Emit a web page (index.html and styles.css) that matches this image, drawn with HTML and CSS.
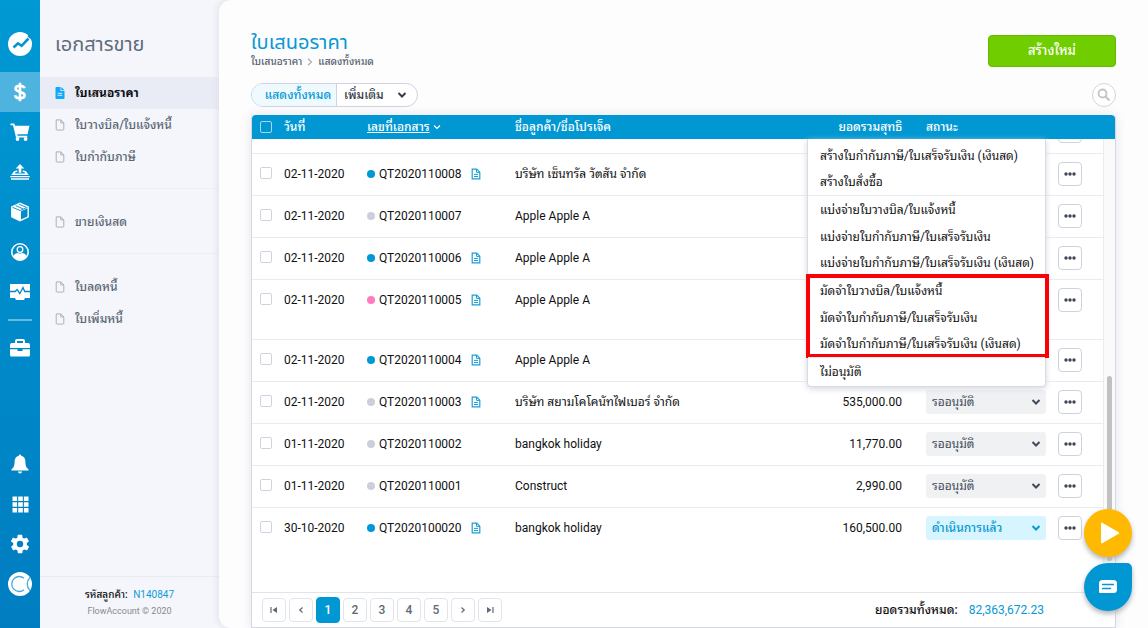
FILE: index.html
```
<!DOCTYPE html>
<html lang="th">
<head>
<meta charset="utf-8">
<meta name="viewport" content="width=device-width, initial-scale=1">
<title>ใบเสนอราคา</title>
<link rel="stylesheet" href="styles.css">
</head>
<body>
<svg class="sprite" aria-hidden="true">
  <symbol id="file" viewBox="0 0 10 12"><path d="M1.2.9h4.6l3 3v6.2a1 1 0 0 1-1 1H2.200a1 1 0 0 1-1-1z M5.800.9v3h3" fill="none" stroke="currentColor" stroke-width="1"/></symbol>
  <symbol id="file-solid" viewBox="0 0 10 12"><path d="M1.500 0h4v4h4v7a1 1 0 0 1-1 1h-7a1 1 0 0 1-1-1V1a1 1 0 0 1 1-1zM6.300 0l3.200 3.200H6.300z" fill="#12a8fb"/><path d="M2.700 6.300h4.500M2.700 8.300h4.500" stroke="#d5f1ff"/></symbol>
  <symbol id="doc" viewBox="0 0 10 12"><path d="M1.200 1.200h4.600l3 3v6.600H1.200z" fill="none" stroke="#1a9fd8" stroke-width="1.200"/><path d="M5.500 1v3.400H9M3 6.400h4M3 8.500h4" fill="none" stroke="#1a9fd8"/></symbol>
  <symbol id="chev" viewBox="0 0 10 8"><path d="M1.500 2L5 5.500 8.500 2" fill="none" stroke="currentColor" stroke-width="2"/></symbol>
  <symbol id="dots" viewBox="0 0 12 4"><circle cx="2" cy="2" r="1.700"/><circle cx="6" cy="2" r="1.700"/><circle cx="10" cy="2" r="1.700"/></symbol>
</svg>
<div class="app">
  <nav class="rail" aria-label="เมนูหลัก">
    <a class="rail-item logo" href="#" aria-label="FlowAccount"><svg viewBox="0 0 24 24" width="24" height="24"><circle cx="12" cy="12" r="12" fill="#fff"/><path d="M5.500 15.500L10 11.300l3.600 2.500L20.500 6.500" fill="none" stroke="#0893cf" stroke-width="2.600"/><path d="M20 3.500l3.500 3" stroke="#0893cf" stroke-width="2"/></svg></a>
    <a class="rail-item active" href="#" aria-label="ขาย"><svg viewBox="0 0 20 20" width="20" height="20"><path d="M14.600 6.300C14.200 4.600 12.400 3.700 10 3.700c-2.600 0-4.400 1-4.400 2.900 0 4.400 9 2.300 9 6.700 0 2-2 3-4.600 3-2.700 0-4.600-1.100-4.900-3.100M10 .8v18.400" fill="none" stroke="#fff" stroke-width="2.600"/></svg></a>
    <a class="rail-item" href="#" aria-label="ซื้อ"><svg viewBox="0 0 20 20" width="20" height="20"><path d="M.5 1.500h3.700l.9 2.200h14.400l-2 8.600H7.300l.3 1.400h9.700v1.800H6L3 3.300H.5z" fill="#fff"/><circle cx="7.500" cy="17" r="1.900" fill="#fff"/><circle cx="15.600" cy="17" r="1.900" fill="#fff"/></svg></a>
    <a class="rail-item" href="#" aria-label="ค่าใช้จ่าย"><svg viewBox="0 0 20 18" width="20" height="18"><path d="M10 1l4.300 4.500h-3v4.200H8.700V5.500h-3z" fill="#fff"/><path d="M7.300 7.200L4 8.200 1.300 12h17.400L16 8.200l-3.300-1v1.600l2.300.8v.9H5v-.9l2.300-.8z" fill="#fff"/><path d="M.3 13.600h19.400M1 16h18" stroke="#fff" stroke-width="1.300"/></svg></a>
    <a class="rail-item" href="#" aria-label="สินค้า"><svg viewBox="0 0 20 20" width="20" height="20"><path d="M10 .6l8.900 3.900v10.800L10 19.500l-8.900-4.200V4.500z" fill="#fff"/><path d="M11 9.300l6.500-3v8.100L11 17.600z" fill="#068bca"/><path d="M2.500 5.300L10 8.500l7.500-3.200M5.700 3.600l7.400 3.300M9 2.200l7 3" fill="none" stroke="#068bca" stroke-width=".9"/></svg></a>
    <a class="rail-item" href="#" aria-label="ผู้ติดต่อ"><svg viewBox="0 0 20 20" width="20" height="20"><circle cx="10" cy="10" r="8.200" fill="none" stroke="#fff" stroke-width="1.500"/><circle cx="10" cy="7.500" r="2.800" fill="none" stroke="#fff" stroke-width="1.300"/><path d="M3.300 14c1-2.200 3-2.800 4.700-3 1.300.8 2.700.8 4 0 1.700.2 3.700.8 4.700 3-1.300 2.700-4 4.500-6.700 4.500S4.600 16.700 3.300 14z" fill="#fff"/></svg></a>
    <a class="rail-item" href="#" aria-label="รายงาน"><svg viewBox="0 0 20 18" width="20" height="18"><path d="M0 1h20v14h-5l-1 2H6l-1-2H0z" fill="#fff"/><path d="M0 8.500h5.200l2-2 2.600 4.200L13 4.500l1.700 4H20" fill="none" stroke="#0587c7" stroke-width="1.300"/></svg></a>
    <hr class="rail-rule">
    <a class="rail-item" href="#" aria-label="เครื่องมือ"><svg viewBox="0 0 20 18" width="20" height="18"><path d="M6 4V2a1 1 0 0 1 1-1h6a1 1 0 0 1 1 1v2" fill="none" stroke="#fff" stroke-width="2"/><path d="M2 4h16a2 2 0 0 1 2 2v3H0V6a2 2 0 0 1 2-2zM0 10.200h7.500V12h5v-1.800H20V16a1.500 1.500 0 0 1-1.500 1.500h-17A1.500 1.500 0 0 1 0 16z" fill="#fff"/></svg></a>
    <div class="rail-bottom">
      <a class="rail-item" href="#" aria-label="แจ้งเตือน"><svg viewBox="0 0 18 20" width="18" height="20"><path d="M9 .5c.8 0 1.200.6 1.200 1.300 2.800.7 4.200 3 4.200 5.800 0 4.600 1.200 6.500 3.100 7.600V16.500H.5v-1.300c1.900-1.100 3.100-3 3.100-7.600C3.600 4.800 5 2.500 7.800 1.800 7.800 1.100 8.200.5 9 .5zM7 17.500h4a2 2 0 0 1-4 0z" fill="#fff"/></svg></a>
      <a class="rail-item" href="#" aria-label="แอป"><svg viewBox="0 0 17 17" width="17" height="17"><path d="M.5.5h4.600v4.600H.5zM6.200.5h4.600v4.600H6.200zM11.900.5h4.600v4.600h-4.600zM.5 6.200h4.600v4.600H.5zM6.200 6.200h4.600v4.600H6.200zM11.900 6.200h4.600v4.600h-4.600zM.5 11.900h4.600v4.600H.5zM6.200 11.900h4.600v4.600H6.200zM11.900 11.900h4.600v4.600h-4.600z" fill="#fff"/></svg></a>
      <a class="rail-item" href="#" aria-label="ตั้งค่า"><svg viewBox="0 0 24 24" width="22" height="22"><path d="M19.400 13c0-.3.1-.6.1-1s0-.7-.1-1l2.100-1.600c.2-.2.300-.4.100-.6l-2-3.500c-.1-.2-.4-.3-.6-.2l-2.500 1a7.300 7.300 0 0 0-1.700-1l-.4-2.600c0-.3-.2-.5-.5-.5h-4c-.2 0-.4.200-.5.400l-.4 2.700c-.6.2-1.100.6-1.700 1l-2.500-1c-.2-.1-.5 0-.6.200l-2 3.500c-.1.200-.1.500.1.600L4.600 11v2l-2.100 1.600c-.2.200-.3.400-.1.600l2 3.500c.1.200.4.300.6.200l2.500-1c.5.400 1.100.7 1.700 1l.4 2.600c0 .3.200.5.5.5h4c.2 0 .4-.2.5-.4l.4-2.700c.6-.2 1.100-.6 1.700-1l2.500 1c.2.1.5 0 .6-.2l2-3.500c.1-.2.1-.5-.1-.6zM12 15.500a3.500 3.500 0 1 1 0-7 3.500 3.500 0 0 1 0 7z" fill="#fff"/></svg></a>
      <a class="rail-item" href="#" aria-label="โปรไฟล์"><svg viewBox="0 0 24 24" width="24" height="24"><circle cx="12" cy="12" r="12" fill="#fff"/><path d="M16 6.200a7.500 7.500 0 1 0 0 11.600" fill="none" stroke="#45acd9" stroke-width="1.300"/><path d="M22 5.500a9 9 0 0 0 0 13" fill="none" stroke="#45acd9" stroke-width="1.300"/></svg></a>
    </div>
  </nav>

  <aside class="side">
    <h2 class="side-title">เอกสารขาย</h2>
    <nav class="side-nav" aria-label="เอกสารขาย">
      <div class="side-group">
        <a class="side-link current" href="#"><svg class="file"><use href="#file-solid"/></svg>ใบเสนอราคา</a>
        <a class="side-link" href="#"><svg class="file"><use href="#file"/></svg>ใบวางบิล/ใบแจ้งหนี้</a>
        <a class="side-link" href="#"><svg class="file"><use href="#file"/></svg>ใบกำกับภาษี</a>
      </div>
      <div class="side-group">
        <a class="side-link" href="#"><svg class="file"><use href="#file"/></svg>ขายเงินสด</a>
      </div>
      <div class="side-group">
        <a class="side-link" href="#"><svg class="file"><use href="#file"/></svg>ใบลดหนี้</a>
        <a class="side-link" href="#"><svg class="file"><use href="#file"/></svg>ใบเพิ่มหนี้</a>
      </div>
    </nav>
    <footer class="side-foot">
      <p class="customer">รหัสลูกค้า: <a href="#">N140847</a></p>
      <p class="copy">FlowAccount © 2020</p>
    </footer>
  </aside>

  <main class="panel">
    <header class="head">
      <div>
        <h1 class="title">ใบเสนอราคา</h1>
        <p class="crumbs"><span>ใบเสนอราคา</span><svg viewBox="0 0 6 8" width="6" height="8"><path d="M1 .8L4.500 4 1 7.200" fill="none" stroke="#a9adb8" stroke-width="1.200"/></svg><span>แสดงทั้งหมด</span></p>
      </div>
      <button class="create" type="button">สร้างใหม่</button>
    </header>
    <div class="tools">
      <div class="filter">
        <button class="filter-all" type="button">แสดงทั้งหมด</button>
        <button class="filter-more" type="button">เพิ่มเติม<svg class="chev"><use href="#chev"/></svg></button>
      </div>
      <button class="search" type="button" aria-label="ค้นหา"><svg viewBox="0 0 14 14" width="14" height="14"><circle cx="5.500" cy="5.500" r="4" fill="none" stroke="#c4c4c8" stroke-width="1.800"/><path d="M8.500 8.500l4 4" stroke="#c4c4c8" stroke-width="2.200"/></svg></button>
    </div>

    <section class="card">
      <table class="grid grid-head">
        <colgroup><col class="c-check"><col class="c-date"><col class="c-doc"><col><col class="c-sum"><col class="c-status"><col class="c-more"></colgroup>
        <thead><tr>
          <th><input type="checkbox" aria-label="เลือกทั้งหมด"></th>
          <th>วันที่</th>
          <th><a href="#">เลขที่เอกสาร</a><svg class="sort" viewBox="0 0 10 8"><path d="M2 2.500l3 3 3-3" fill="none" stroke="#fff" stroke-width="1.200"/></svg></th>
          <th>ชื่อลูกค้า/ชื่อโปรเจ็ค</th>
          <th class="sum">ยอดรวมสุทธิ</th>
          <th class="status">สถานะ</th>
          <th></th>
        </tr></thead>
      </table>
      <div class="scroll">
        <div class="rows">
          <table class="grid grid-body">
            <colgroup><col class="c-check"><col class="c-date"><col class="c-doc"><col><col class="c-sum"><col class="c-status"><col class="c-more"></colgroup>
            <tbody>
              <tr><td colspan="6"></td><td><button class="more" type="button" aria-label="เพิ่มเติม"><svg class="dots"><use href="#dots"/></svg></button></td></tr>
              <tr><td><input type="checkbox" aria-label="QT2020110008"></td><td>02-11-2020</td><td><span class="doc"><i class="dot blue"></i>QT2020110008<svg class="ref"><use href="#doc"/></svg></span></td><td>บริษัท เซ็นทรัล วัตสัน จำกัด</td><td></td><td></td><td><button class="more" type="button" aria-label="เพิ่มเติม"><svg class="dots"><use href="#dots"/></svg></button></td></tr>
              <tr><td><input type="checkbox" aria-label="QT2020110007"></td><td>02-11-2020</td><td><span class="doc"><i class="dot"></i>QT2020110007</span></td><td>Apple Apple A</td><td></td><td></td><td><button class="more" type="button" aria-label="เพิ่มเติม"><svg class="dots"><use href="#dots"/></svg></button></td></tr>
              <tr><td><input type="checkbox" aria-label="QT2020110006"></td><td>02-11-2020</td><td><span class="doc"><i class="dot blue"></i>QT2020110006<svg class="ref"><use href="#doc"/></svg></span></td><td>Apple Apple A</td><td></td><td></td><td><button class="more" type="button" aria-label="เพิ่มเติม"><svg class="dots"><use href="#dots"/></svg></button></td></tr>
              <tr class="tall"><td><input type="checkbox" aria-label="QT2020110005"></td><td>02-11-2020</td><td><span class="doc"><i class="dot pink"></i>QT2020110005<svg class="ref"><use href="#doc"/></svg></span></td><td>Apple Apple A</td><td></td><td></td><td><button class="more" type="button" aria-label="เพิ่มเติม"><svg class="dots"><use href="#dots"/></svg></button></td></tr>
              <tr><td><input type="checkbox" aria-label="QT2020110004"></td><td>02-11-2020</td><td><span class="doc"><i class="dot blue"></i>QT2020110004<svg class="ref"><use href="#doc"/></svg></span></td><td>Apple Apple A</td><td></td><td></td><td><button class="more" type="button" aria-label="เพิ่มเติม"><svg class="dots"><use href="#dots"/></svg></button></td></tr>
              <tr><td><input type="checkbox" aria-label="QT2020110003"></td><td>02-11-2020</td><td><span class="doc"><i class="dot"></i>QT2020110003<svg class="ref"><use href="#doc"/></svg></span></td><td>บริษัท สยามโคโคนัทไฟเบอร์ จำกัด</td><td class="sum">535,000.00</td><td class="status"><div class="pick"><select aria-label="สถานะ"><option>รออนุมัติ</option></select><svg class="chev"><use href="#chev"/></svg></div></td><td><button class="more" type="button" aria-label="เพิ่มเติม"><svg class="dots"><use href="#dots"/></svg></button></td></tr>
              <tr><td><input type="checkbox" aria-label="QT2020110002"></td><td>01-11-2020</td><td><span class="doc"><i class="dot"></i>QT2020110002</span></td><td>bangkok holiday</td><td class="sum">11,770.00</td><td class="status"><div class="pick"><select aria-label="สถานะ"><option>รออนุมัติ</option></select><svg class="chev"><use href="#chev"/></svg></div></td><td><button class="more" type="button" aria-label="เพิ่มเติม"><svg class="dots"><use href="#dots"/></svg></button></td></tr>
              <tr><td><input type="checkbox" aria-label="QT2020110001"></td><td>01-11-2020</td><td><span class="doc"><i class="dot"></i>QT2020110001</span></td><td>Construct</td><td class="sum">2,990.00</td><td class="status"><div class="pick"><select aria-label="สถานะ"><option>รออนุมัติ</option></select><svg class="chev"><use href="#chev"/></svg></div></td><td><button class="more" type="button" aria-label="เพิ่มเติม"><svg class="dots"><use href="#dots"/></svg></button></td></tr>
              <tr><td><input type="checkbox" aria-label="QT2020100020"></td><td>30-10-2020</td><td><span class="doc"><i class="dot blue"></i>QT2020100020<svg class="ref"><use href="#doc"/></svg></span></td><td>bangkok holiday</td><td class="sum">160,500.00</td><td class="status"><div class="pick done"><select aria-label="สถานะ"><option>ดำเนินการแล้ว</option></select><svg class="chev"><use href="#chev"/></svg></div></td><td><button class="more" type="button" aria-label="เพิ่มเติม"><svg class="dots"><use href="#dots"/></svg></button></td></tr>
            </tbody>
          </table>
        </div>
        <div class="track"><div class="thumb"></div></div>
      </div>
      <div class="menu">
        <div class="menu-group first">
          <button type="button">สร้างใบกำกับภาษี/ใบเสร็จรับเงิน (เงินสด)</button>
          <button type="button">สร้างใบสั่งซื้อ</button>
        </div>
        <div class="menu-group">
          <button type="button">แบ่งจ่ายใบวางบิล/ใบแจ้งหนี้</button>
          <button type="button">แบ่งจ่ายใบกำกับภาษี/ใบเสร็จรับเงิน</button>
          <button type="button">แบ่งจ่ายใบกำกับภาษี/ใบเสร็จรับเงิน (เงินสด)</button>
        </div>
        <div class="menu-group marked">
          <button type="button">มัดจำใบวางบิล/ใบแจ้งหนี้</button>
          <button type="button">มัดจำใบกำกับภาษี/ใบเสร็จรับเงิน</button>
          <button type="button">มัดจำใบกำกับภาษี/ใบเสร็จรับเงิน (เงินสด)</button>
        </div>
        <div class="menu-group last">
          <button type="button">ไม่อนุมัติ</button>
        </div>
      </div>
      <footer class="card-foot">
        <nav class="pages" aria-label="หน้า">
          <button type="button" aria-label="หน้าแรก"><svg viewBox="0 0 8 8" width="8" height="8"><path d="M1 1v6" stroke="#5d6878" stroke-width="1.200"/><path d="M7 1v6L2.500 4z" fill="#5d6878"/></svg></button>
          <button type="button" aria-label="ก่อนหน้า"><svg viewBox="0 0 8 8" width="8" height="8"><path d="M5.500 1.500L2.800 4l2.700 2.500" fill="none" stroke="#5d6878" stroke-width="1.200"/></svg></button>
          <button class="on" type="button">1</button>
          <button type="button">2</button>
          <button type="button">3</button>
          <button type="button">4</button>
          <button type="button">5</button>
          <button type="button" aria-label="ถัดไป"><svg viewBox="0 0 8 8" width="8" height="8"><path d="M2.500 1.500L5.200 4 2.500 6.500" fill="none" stroke="#5d6878" stroke-width="1.200"/></svg></button>
          <button type="button" aria-label="หน้าสุดท้าย"><svg viewBox="0 0 8 8" width="8" height="8"><path d="M7 1v6" stroke="#5d6878" stroke-width="1.200"/><path d="M1 1v6l4.500-3z" fill="#5d6878"/></svg></button>
        </nav>
        <p class="total">ยอดรวมทั้งหมด: <strong>82,363,672.23</strong></p>
      </footer>
    </section>
  </main>
</div>
<div class="float">
  <button class="play" type="button" aria-label="เล่นวิดีโอ"><svg viewBox="0 0 20 22" width="20" height="22"><path d="M1 1.500v19a.8.8 0 0 0 1.200.7l16.500-9.500a.8.8 0 0 0 0-1.400L2.200.8A.8.8 0 0 0 1 1.500z" fill="#fff"/></svg></button>
  <button class="chat" type="button" aria-label="แชท"><svg viewBox="0 0 20 16" width="20" height="16"><path d="M4.500 1h11A3.500 3.500 0 0 1 19 4.500v6a3.500 3.500 0 0 1-3.500 3.500H2a1 1 0 0 1-1-1V4.500A3.500 3.500 0 0 1 4.500 1z" fill="#fff"/><path d="M4.500 5.500h11M4.500 9.500h8" stroke="#0496d3" stroke-width="1.300" stroke-linecap="round"/></svg></button>
</div>
</body>
</html>
```
FILE: styles.css
```
* { box-sizing: border-box; }
body { margin: 0; background: #f5f6fb; color: #101012; font: 500 12px/16px Roboto, "Noto Sans Thai Looped", Loma, "Noto Sans Thai", "Noto Sans", sans-serif; }
button, select, input { font: inherit; color: inherit; margin: 0; }
button { padding: 0; border: 0; background: none; cursor: pointer; }
a { text-decoration: none; color: inherit; }
p, h1, h2 { margin: 0; }
svg { display: block; flex: none; }
.sprite { position: absolute; width: 0; height: 0; }
.app { display: flex; height: 100vh; }

.rail { width: 40px; flex: none; display: flex; flex-direction: column; padding: 24px 0; background: linear-gradient(#0099d4, #007dc0); }
.rail-item { height: 40px; display: flex; align-items: center; justify-content: center; }
.rail-item.logo { margin-bottom: 8px; }
.rail-item.active { background: #4eb3de; }
.rail-rule { width: 24px; height: 2px; margin: 7px auto; border: 0; background: #6ab9e0; }
.rail-bottom { margin-top: auto; }

.side { width: 179px; flex: none; display: flex; flex-direction: column; }
.side-title, .title { font-family: Roboto, "Noto Sans Thai", "Noto Sans", sans-serif; font-size: 20px; line-height: 24px; font-weight: 400; }
.side-title { padding: 32px 15px 21px; color: #5e6c7c; }
.side-group { padding-top: 17px; }
.side-group:first-child { padding-top: 0; }
.side-group:not(:last-child) { padding-bottom: 15px; border-bottom: 1px solid #eeeff4; }
.side-link { display: flex; align-items: center; gap: 10px; height: 32px; padding-left: 15px; color: #5b6775; }
.side-link.current { background: #e9ecf4; color: #101014; font-weight: 700; }
.file { width: 10px; height: 12px; color: #a9b0bd; }
.side-foot { margin-top: auto; padding: 10px 0 9px; border-top: 1px solid #e9ebee; font-size: 10px; text-align: center; }
.customer a { color: #109bd5; margin-left: 3px; font-weight: 400; }
.copy { font-size: 9px; color: #868a90; font-weight: 400; }

.panel { flex: 1; min-width: 0; display: flex; flex-direction: column; padding: 30px 32px 0; background: #fdfdfe; border-radius: 12px 0 0 12px; box-shadow: 0 0 8px #d9dbe6; }
.head { display: flex; justify-content: space-between; align-items: flex-start; height: 53px; }
.title { color: #0898d5; }
.crumbs { display: flex; align-items: center; gap: 5px; font-size: 10px; color: #565f6e; }
.create { width: 128px; height: 32px; margin-top: 5px; border: 1px solid #65bb00; border-radius: 4px; background: #70cd00; color: #fff; font-size: 13px; }
.tools { display: flex; justify-content: space-between; align-items: center; height: 24px; margin-bottom: 8px; }
.filter { display: flex; width: 167px; height: 24px; border: 1px solid #cfd2e3; border-radius: 12px; overflow: hidden; background: #fff; }
.filter-all { width: 85px; padding-left: 8px; background: #effaff; border-right: 1px solid #cfd2e3; color: #0898d5; }
.filter-more { flex: 1; display: flex; align-items: center; justify-content: space-between; padding: 0 10px 0 7px; color: #353d4a; }
.chev { width: 10px; height: 8px; }
.search { width: 24px; height: 24px; display: flex; align-items: center; justify-content: center; border: 1px solid #d5d5da; border-radius: 50%; background: #fff; }

.card { position: relative; flex: 1; min-height: 0; display: flex; flex-direction: column; border: 1px solid #d4d7e3; border-top: 0; border-radius: 4px 4px 0 0; background: #fff; box-shadow: 0 0 12px #e4e5ea; }
.grid { width: 100%; border-collapse: collapse; table-layout: fixed; }
.c-check { width: 32px; }
.c-date { width: 83px; }
.c-doc { width: 148px; }
.c-sum { width: 120px; }
.c-status { width: 150px; }
.c-more { width: 51px; }
th, td { padding: 0; text-align: left; white-space: nowrap; }
.grid-head { border-radius: 4px 4px 0 0; background: #0097d3; color: #fff; }
.grid-head .c-more { width: 63px; }
th { height: 24px; font-weight: 500; }
th a { text-decoration: underline; }
.sort { display: inline-block; width: 10px; height: 8px; margin-left: 2px; }
input[type="checkbox"] { appearance: none; display: block; width: 12px; height: 12px; margin-left: 8px; border: 1px solid #d0d3df; border-radius: 2px; background: #fff; }
th input[type="checkbox"] { background: transparent; border-color: #a5d8ee; }
.scroll { flex: 1; min-height: 0; display: flex; overflow: hidden; }
.rows { flex: 1; display: flex; flex-direction: column; justify-content: flex-end; padding-bottom: 43px; }
.grid-body tr { height: 42px; border-bottom: 1px solid #e9ebef; }
.grid-body tr.tall { height: 60px; }
.grid-body tr:last-child { border-bottom: 0; }
td { padding-top: 8px; vertical-align: top; line-height: 24px; font-weight: 400; }
td input[type="checkbox"] { margin-top: 5px; }
.sum { text-align: right; }
.status { padding-left: 24px; }
.doc { display: flex; align-items: center; }
.dot { width: 8px; height: 8px; margin-right: 4px; border-radius: 50%; background: #cbcfdc; }
.dot.blue { background: #0098d5; }
.dot.pink { background: #ff7abf; }
.ref { width: 10px; height: 12px; margin-left: 9px; }
.pick { position: relative; width: 120px; color: #414b5a; }
.pick.done { color: #0898d5; font-weight: 500; }
.pick select { display: block; appearance: none; width: 100%; height: 24px; padding: 0 20px 0 6px; border: 0; border-radius: 3px; background: #f0f1f3; }
.pick.done select { background: #d7f5fe; }
.pick .chev { position: absolute; right: 5px; top: 8px; pointer-events: none; }
.more { display: flex; width: 24px; height: 24px; align-items: center; justify-content: center; margin-left: 6px; border: 1px solid #cfd2de; border-radius: 4px; background: #fff; }
.dots { width: 12px; height: 4px; fill: #3c4656; }
.track { width: 12px; padding: 237px 3px 31px; border-left: 1px solid #ececf0; background: #fafafa; }
.thumb { height: 100%; border-radius: 4px; background: #c1c1c1; }

.menu { position: absolute; top: 24px; right: 69px; width: 239px; padding-top: 4px; border: 1px solid #d8dbe4; border-top: 0; border-radius: 0 0 4px 4px; background: #fff; box-shadow: 0 2px 6px #d5d8e0; }
.menu-group { position: relative; border-top: 1px solid #e9ebef; }
.menu-group.first { border-top: 0; }
.menu-group button { display: flex; align-items: center; width: 100%; height: 27px; padding-left: 12px; font-weight: 400; white-space: nowrap; }
.menu-group.first button, .menu-group button:last-child { height: 26px; }
.menu-group.last button { height: 28px; }
.menu-group.marked::after { content: ""; position: absolute; inset: -3px -4px -1px -2px; border: 4px solid #fb0007; pointer-events: none; }

.card-foot { display: flex; justify-content: space-between; align-items: center; height: 35px; padding: 0 71px 0 10px; border-top: 1px solid #e2e4ea; }
.pages { display: flex; align-items: center; gap: 3px; }
.pages button { width: 24px; height: 24px; display: flex; align-items: center; justify-content: center; border: 1px solid #e2e4ec; border-radius: 4px; background: #fff; color: #5d6878; }
.pages .on { height: 26px; border-color: #0097d3; background: #0097d3; color: #fff; }
.total strong { margin-left: 8px; font-weight: 400; color: #0898d5; }

.float { position: fixed; right: 16px; bottom: 17px; display: flex; flex-direction: column; gap: 6px; }
.float button { width: 48px; height: 48px; display: flex; align-items: center; justify-content: center; box-shadow: 0 3px 5px #b4b6ba; }
.play { padding-left: 4px; border-radius: 50%; background: #ffb900; }
.chat { border-radius: 24px 5px 24px 24px; background: #0097d3; }
```
